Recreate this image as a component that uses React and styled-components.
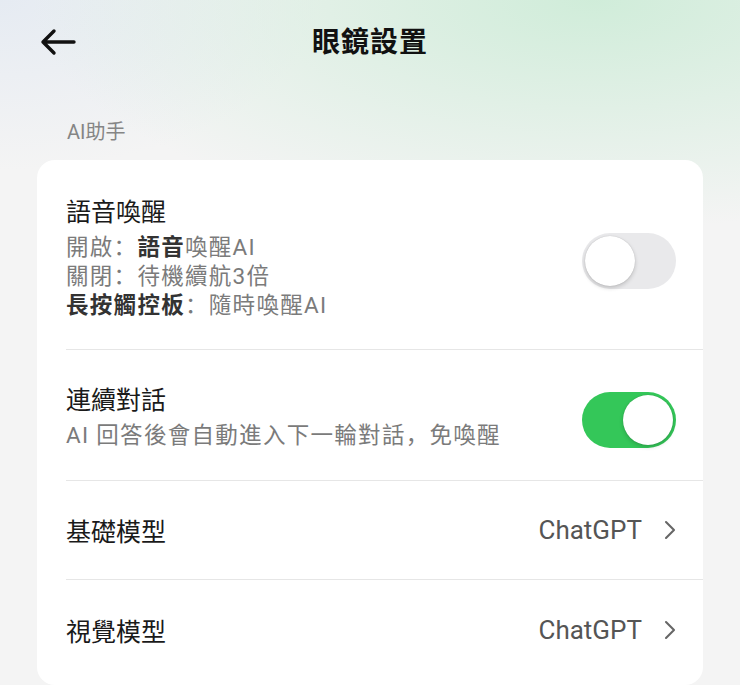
import React, { useState } from 'react';
import styled, { createGlobalStyle } from 'styled-components';

const GlobalStyle = createGlobalStyle`
  html, body {
    margin: 0;
    padding: 0;
  }
  body {
    width: 740px;
    min-height: 685px;
    overflow: hidden;
    font-family: Roboto, "Noto Sans CJK SC", "Noto Sans", sans-serif;
    background:
      radial-gradient(ellipse 560px 230px at 80% 0%, rgba(206, 236, 216, 0.95), rgba(206, 236, 216, 0) 100%),
      radial-gradient(ellipse 320px 170px at 0% 0%, rgba(228, 234, 242, 0.9), rgba(228, 234, 242, 0) 100%),
      #f4f4f4;
  }
`;

const Page = styled.div`
  width: 740px;
  height: 685px;
  display: flex;
  flex-direction: column;
  box-sizing: border-box;
`;

const Header = styled.header`
  height: 84px;
  display: grid;
  grid-template-columns: 1fr auto 1fr;
  align-items: center;
`;

const BackButton = styled.button`
  justify-self: start;
  margin-left: 40px;
  padding: 0;
  border: 0;
  background: none;
  display: flex;
  cursor: pointer;
`;

const Title = styled.h1`
  margin: 0 0 4px;
  font-family: "Noto Sans CJK SC", sans-serif;
  font-size: 28px;
  font-weight: 700;
  color: #111;
  letter-spacing: 1px;
`;

const SectionLabel = styled.div`
  margin: 34px 0 0 67px;
  font-family: Roboto, "Noto Sans CJK SC", sans-serif;
  font-size: 20px;
  line-height: 28px;
  color: #858585;
`;

const Card = styled.section`
  margin: 14px 37px 0;
  background: #fff;
  border-radius: 18px;
  padding-left: 29px;
  flex: 1;
`;

const Row = styled.div`
  display: flex;
  align-items: center;
  justify-content: space-between;
  padding: ${p => p.$pad || '0'};
  min-height: ${p => p.$height || 'auto'};
  padding-right: 27px;
  box-sizing: border-box;
  border-bottom: ${p => (p.$last ? 'none' : '1.5px solid #e6e6e6')};
`;

const TextBlock = styled.div`
  display: flex;
  flex-direction: column;
`;

const RowTitle = styled.div`
  font-family: "Noto Sans CJK SC", sans-serif;
  font-size: 25px;
  line-height: 32px;
  color: #1a1a1a;
`;

const Sub = styled.div`
  font-family: Roboto, "Noto Sans CJK SC", sans-serif;
  font-size: 22.5px;
  line-height: 29px;
  color: #7b7b7b;
  letter-spacing: 1.3px;
  margin-top: ${p => (p.$first ? '7px' : '0')};
`;

const Strong = styled.span`
  color: #333;
  font-weight: 700;
`;

const Track = styled.button`
  width: 94px;
  height: 56px;
  margin-top: 8px;
  border-radius: 28px;
  border: 0;
  padding: 3px;
  display: flex;
  justify-content: ${p => (p.$on ? 'flex-end' : 'flex-start')};
  background: ${p => (p.$on ? '#34c759' : '#e9e9eb')};
  cursor: pointer;
  flex-shrink: 0;
`;

const Knob = styled.span`
  width: 50px;
  height: 50px;
  border-radius: 50%;
  background: #fff;
  box-shadow: 0 2px 4px rgba(0, 0, 0, 0.18), 0 0 1px rgba(0, 0, 0, 0.2);
`;

const Value = styled.div`
  display: flex;
  align-items: center;
  gap: 22px;
  font-family: Roboto, sans-serif;
  font-size: 26px;
  color: #555;
`;

const Toggle = ({ on, onClick }) => (
  <Track $on={on} onClick={onClick}>
    <Knob />
  </Track>
);

const Chevron = () => (
  <svg width="12" height="20" viewBox="0 0 12 20">
    <polyline points="2,2 10,10 2,18" fill="none" stroke="#666" strokeWidth="2.1" strokeLinecap="round" strokeLinejoin="round" />
  </svg>
);

const ArrowLeft = () => (
  <svg width="36" height="28" viewBox="0 0 36 28">
    <path d="M14 3 L3 14 L14 25 M3 14 H34" fill="none" stroke="#111" strokeWidth="3.4" strokeLinecap="round" strokeLinejoin="round" />
  </svg>
);

export default function App() {
  const [wake, setWake] = useState(false);
  const [cont, setCont] = useState(true);

  return (
    <>
      <GlobalStyle />
      <Page>
        <Header>
          <BackButton><ArrowLeft /></BackButton>
          <Title>眼鏡設置</Title>
          <div />
        </Header>
        <SectionLabel>AI助手</SectionLabel>
        <Card>
          <Row $pad="34px 0 29px">
            <TextBlock>
              <RowTitle>語音喚醒</RowTitle>
              <Sub $first>開啟：<Strong>語音</Strong>喚醒AI</Sub>
              <Sub>關閉：待機續航3倍</Sub>
              <Sub><Strong>長按觸控板</Strong>：隨時喚醒AI</Sub>
            </TextBlock>
            <Toggle on={wake} onClick={() => setWake(!wake)} />
          </Row>
          <Row $pad="32px 0 30px">
            <TextBlock>
              <RowTitle>連續對話</RowTitle>
              <Sub $first>AI 回答後會自動進入下一輪對話，免喚醒</Sub>
            </TextBlock>
            <Toggle on={cont} onClick={() => setCont(!cont)} />
          </Row>
          <Row $height="99px">
            <RowTitle>基礎模型</RowTitle>
            <Value>ChatGPT<Chevron /></Value>
          </Row>
          <Row $height="100px" $last>
            <RowTitle>視覺模型</RowTitle>
            <Value>ChatGPT<Chevron /></Value>
          </Row>
        </Card>
      </Page>
    </>
  );
}
